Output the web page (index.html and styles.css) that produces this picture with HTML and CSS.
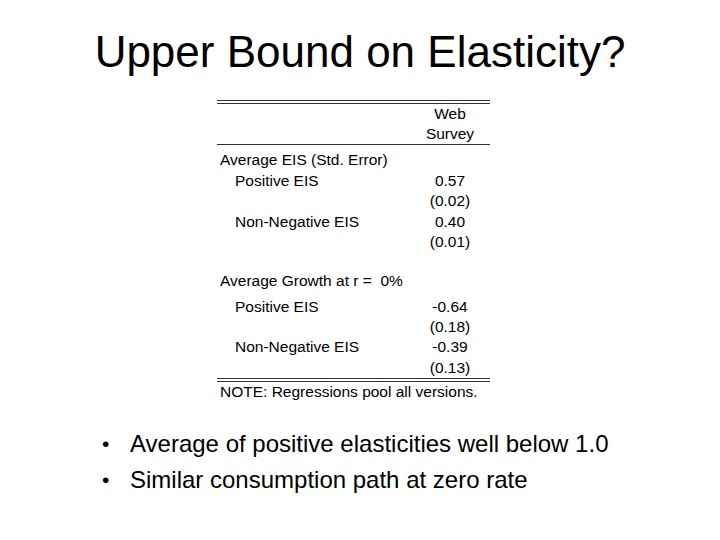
FILE: index.html
```html
<!DOCTYPE html>
<html lang="en">
<head>
  <meta charset="UTF-8" />
  <title>Upper Bound on Elasticity?</title>
  <link rel="stylesheet" href="styles.css">
</head>
<body>
  <div class="slide">
    <h1 class="title">Upper Bound on Elasticity?</h1>

    <div class="table-wrap">
      <div class="eis-table">
        <div class="head">
          <div class="row"><span></span><span class="val">Web</span></div>
          <div class="row"><span></span><span class="val">Survey</span></div>
        </div>

        <div class="group first">
          <div class="row"><span>Average EIS (Std. Error)</span><span></span></div>
          <div class="row"><span class="sub">Positive EIS</span><span class="val">0.57</span></div>
          <div class="row"><span></span><span class="val">(0.02)</span></div>
          <div class="row"><span class="sub">Non-Negative EIS</span><span class="val">0.40</span></div>
          <div class="row"><span></span><span class="val">(0.01)</span></div>
        </div>

        <div class="group second">
          <div class="row lead"><span>Average Growth at r =&nbsp; 0%</span><span></span></div>
          <div class="row"><span class="sub">Positive EIS</span><span class="val">-0.64</span></div>
          <div class="row"><span></span><span class="val">(0.18)</span></div>
          <div class="row"><span class="sub">Non-Negative EIS</span><span class="val">-0.39</span></div>
          <div class="row"><span></span><span class="val">(0.13)</span></div>
        </div>

        <div class="note">NOTE: Regressions pool all versions.</div>
      </div>
    </div>

    <ul class="points">
      <li>Average of positive elasticities well below 1.0</li>
      <li>Similar consumption path at zero rate</li>
    </ul>
  </div>
</body>
</html>
```

FILE: styles.css
```css
html, body {
  margin: 0;
  padding: 0;
}

body {
  font-family: "Liberation Sans", Arial, sans-serif;
  background: #fff;
  color: #000;
}

.slide {
  width: 720px;
  height: 540px;
  overflow: hidden;
}

.title {
  margin: 0;
  padding-top: 30px;
  font-size: 44px;
  font-weight: normal;
  line-height: 44px;
  text-align: center;
}

.table-wrap {
  padding-left: 217px;
  margin-top: 26px;
}

.eis-table {
  width: 273px;
  font-size: 15.5px;
  border-top: 4px double #333;
}

.row {
  display: grid;
  grid-template-columns: 193px 80px;
  line-height: 20.6px;
  white-space: nowrap;
}

.row span {
  padding-left: 3px;
}

.row .sub {
  padding-left: 18px;
}

.row .val {
  padding-left: 0;
  text-align: center;
}

.head .row {
  line-height: 20px;
}

.head {
  border-bottom: 1px solid #333;
}

.group.first {
  padding-top: 5px;
}

.group.second {
  padding-top: 17.7px;
  border-bottom: 4px double #333;
}

.group.second .row {
  line-height: 20.2px;
}

.group.second .row.lead {
  line-height: 20.6px;
  margin-bottom: 5.7px;
}

.note {
  padding-left: 3px;
  line-height: 20px;
  white-space: nowrap;
}

.points {
  list-style: none;
  margin: 24px 0 0;
  padding: 0 0 0 102px;
  font-size: 24px;
  line-height: 36px;
}

.points li {
  display: flex;
  align-items: center;
}

.points li::before {
  content: "\2022";
  width: 28px;
  flex-shrink: 0;
  font-size: 21px;
  line-height: 36px;
}
```
